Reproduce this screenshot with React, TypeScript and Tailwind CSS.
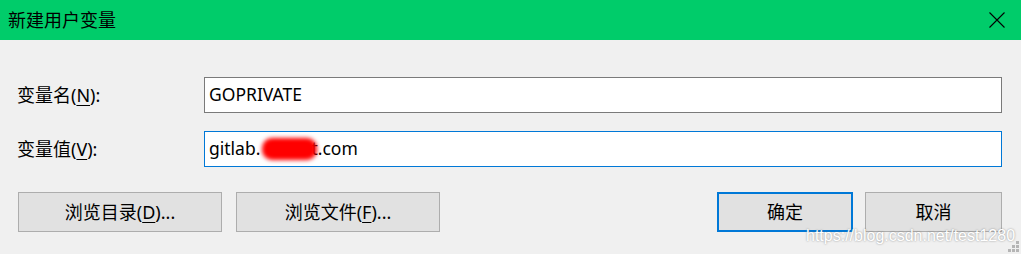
import React from "react";

const font = { fontFamily: '"Noto Sans", "Noto Sans CJK SC", sans-serif' };

function U({ c }: { c: string }) {
  return <span className="underline underline-offset-[3px] decoration-1">{c}</span>;
}

export default function App() {
  return (
    <div className="relative w-[1021px] h-[254px] bg-[#f0f0f0] overflow-hidden text-[18px] text-black" style={font}>
      <div className="h-[40px] bg-[#00cc6a] flex items-center justify-between pl-[8px] pr-[16px]">
        <span className="leading-none text-[18px]">新建用户变量</span>
        <svg width="16" height="16" viewBox="0 0 16 16" className="shrink-0">
          <path d="M0.5 0.5 L15.5 15.5 M15.5 0.5 L0.5 15.5" stroke="#000" strokeWidth="1.1" fill="none" />
        </svg>
      </div>
      <div className="flex flex-col pt-[37px] pl-[17px]">
        <div className="flex items-center h-[36px]">
          <div className="w-[187px] leading-none">变量名(<U c="N" />):</div>
          <div className="w-[798px] h-[36px] bg-white border border-[#7a7a7a] flex items-center pl-[4px] leading-none text-[17.5px]">GOPRIVATE</div>
        </div>
        <div className="flex items-center h-[36px] mt-[18px]">
          <div className="w-[187px] leading-none">变量值(<U c="V" />):</div>
          <div className="relative w-[798px] h-[36px] bg-white border border-[#0078d7] flex items-center pl-[4px] leading-none text-[17.5px]">
            <span>gitlab.</span>
            <span className="inline-block w-[51px]" />
            <span>t.com</span>
            <div className="absolute left-[57px] top-[6px] w-[55px] h-[22px] rounded-[10px] bg-[#ff0000] blur-[2px]" />
          </div>
        </div>
        <div className="flex h-[40px] mt-[25px] pl-[1px]">
          <div className="w-[204px] h-[40px] bg-[#e1e1e1] border border-[#adadad] flex items-center justify-center leading-none">浏览目录(<U c="D" />)...</div>
          <div className="w-[204px] h-[40px] ml-[14px] bg-[#e1e1e1] border border-[#adadad] flex items-center justify-center leading-none">浏览文件(<U c="F" />)...</div>
          <div className="w-[136px] h-[40px] ml-[277px] bg-[#e1e1e1] border-2 border-[#0078d7] flex items-center justify-center leading-none">确定</div>
          <div className="w-[137px] h-[40px] ml-[12px] bg-[#e1e1e1] border border-[#adadad] flex items-center justify-center leading-none">取消</div>
        </div>
      </div>
      <div
        className="absolute left-[806px] top-[228px] text-[16px] leading-none text-white"
        style={{ fontFamily: '"Liberation Sans", Arial, sans-serif', textShadow: "0 0 2px rgba(110,110,110,0.8)" }}
      >
        https://blog.csdn.net/test1280
      </div>
      <svg className="absolute right-[2px] bottom-[2px]" width="11" height="11" viewBox="0 0 11 11">
        <g fill="#b5b5b5">
          <rect x="8" y="0" width="3" height="3" />
          <rect x="4" y="4" width="3" height="3" />
          <rect x="8" y="4" width="3" height="3" />
          <rect x="0" y="8" width="3" height="3" />
          <rect x="4" y="8" width="3" height="3" />
          <rect x="8" y="8" width="3" height="3" />
        </g>
      </svg>
    </div>
  );
}
